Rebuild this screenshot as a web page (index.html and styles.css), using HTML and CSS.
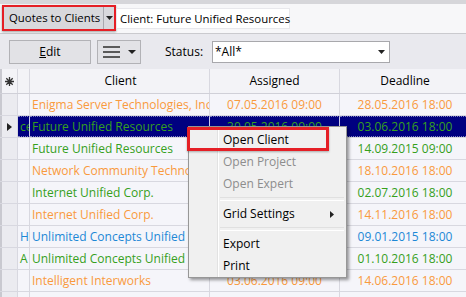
FILE: index.html
```html
<!DOCTYPE html>
<html>
<head>
<meta charset="utf-8">
<link rel="stylesheet" href="styles.css">
</head>
<body>
<div class="app">
  <div class="topstrip"></div>
  <div class="topbar">
    <div class="viewmark">
      <div class="viewbtn">
        <span class="viewlabel">Quotes to Clients</span>
        <span class="viewsplit"><svg width="7" height="4" viewBox="0 0 7 4"><path d="M0 0h7L3.5 4z" fill="#222"/></svg></span>
      </div>
    </div>
    <div class="crumb">Client: Future Unified Resources</div>
  </div>
  <div class="toolbar">
    <div class="btn edit"><span><u>E</u>dit</span></div>
    <div class="btn menubtn">
      <svg width="17" height="12" viewBox="0 0 17 12"><rect x="0" y="0" width="17" height="2" fill="#5a5a5a"/><rect x="0" y="5" width="17" height="2" fill="#5a5a5a"/><rect x="0" y="10" width="17" height="2" fill="#5a5a5a"/></svg>
      <svg width="8" height="4" viewBox="0 0 8 4"><path d="M0 0h8L4 4z" fill="#222"/></svg>
    </div>
    <span class="statuslbl">Status:</span>
    <div class="select"><span>*All*</span><svg width="7" height="4" viewBox="0 0 7 4"><path d="M0 0h7L3.5 4z" fill="#222"/></svg></div>
  </div>
  <div class="grid">
    <div class="row head">
      <div class="c c0"><svg width="9" height="9" viewBox="0 0 9 9"><g stroke="#333" stroke-width="1.3"><path d="M4.5 0v9M0 4.5h9M1.3 1.3l6.4 6.4M7.7 1.3l-6.4 6.4"/></g></svg></div>
      <div class="c c1"></div>
      <div class="c c2 hc">Client</div>
      <div class="c c3 hc">Assigned</div>
      <div class="c c4 hc">Deadline</div>
    </div>
    <div class="row or">
      <div class="c c0"></div><div class="c c1"></div>
      <div class="c c2">Enigma Server Technologies, Inc.</div>
      <div class="c c3">07.05.2016 09:00</div>
      <div class="c c4">28.05.2016 18:00</div>
    </div>
    <div class="row gr sel">
      <div class="c c0"><svg width="5" height="8" viewBox="0 0 5 8"><path d="M0 0l5 4-5 4z" fill="#222"/></svg></div>
      <div class="c c1"><span class="frag">ce</span></div>
      <div class="c c2">Future Unified Resources</div>
      <div class="c c3">30.05.2016 09:00</div>
      <div class="c c4">03.06.2016 18:00</div>
    </div>
    <div class="row gr">
      <div class="c c0"></div><div class="c c1"></div>
      <div class="c c2">Future Unified Resources</div>
      <div class="c c3">01.09.2015 09:00</div>
      <div class="c c4">14.09.2015 09:00</div>
    </div>
    <div class="row or">
      <div class="c c0"></div><div class="c c1"></div>
      <div class="c c2">Network Community Technologies</div>
      <div class="c c3">10.10.2016 09:00</div>
      <div class="c c4">18.10.2016 18:00</div>
    </div>
    <div class="row gr">
      <div class="c c0"></div><div class="c c1"></div>
      <div class="c c2">Internet Unified Corp.</div>
      <div class="c c3">20.06.2016 09:00</div>
      <div class="c c4">02.07.2016 18:00</div>
    </div>
    <div class="row or">
      <div class="c c0"></div><div class="c c1"></div>
      <div class="c c2">Internet Unified Corp.</div>
      <div class="c c3">01.11.2016 09:00</div>
      <div class="c c4">14.11.2016 18:00</div>
    </div>
    <div class="row bl">
      <div class="c c0"></div><div class="c c1"><span class="frag">H</span></div>
      <div class="c c2">Unlimited Concepts Unified</div>
      <div class="c c3">02.01.2015 09:00</div>
      <div class="c c4">09.01.2015 18:00</div>
    </div>
    <div class="row gr">
      <div class="c c0"></div><div class="c c1"><span class="frag">A</span></div>
      <div class="c c2">Unlimited Concepts Unified</div>
      <div class="c c3">20.09.2016 09:00</div>
      <div class="c c4">01.10.2016 18:00</div>
    </div>
    <div class="row or">
      <div class="c c0"></div><div class="c c1"></div>
      <div class="c c2">Intelligent Interworks</div>
      <div class="c c3">03.06.2016 09:00</div>
      <div class="c c4">14.06.2016 18:00</div>
    </div>
    <div class="row or">
      <div class="c c0"></div><div class="c c1"></div>
      <div class="c c2"></div>
      <div class="c c3"></div>
      <div class="c c4"></div>
    </div>
  </div>

  <div class="ctxmenu">
    <div class="mi">Open Client</div>
    <div class="mi dis">Open Project</div>
    <div class="mi dis">Open Expert</div>
    <div class="msep"></div>
    <div class="mi">Grid Settings<svg class="sub" width="4" height="7" viewBox="0 0 4 7"><path d="M0 0l4 3.5L0 7z" fill="#222"/></svg></div>
    <div class="msep"></div>
    <div class="mi">Export</div>
    <div class="mi">Print</div>
  </div>
  <div class="mark"></div>
</div>
</body>
</html>
```
FILE: styles.css
```css
* { box-sizing: border-box; }
html, body { margin: 0; padding: 0; }
body {
  width: 466px;
  height: 297px;
  overflow: hidden;
  font-family: "Open Sans", "Noto Sans", sans-serif;
  font-size: 12px;
  color: #000;
  background: #f5f5fa;
}
.app { position: relative; width: 466px; height: 297px; overflow: hidden; }

.topstrip { height: 4px; background: #d6d6da; }
.topbar {
  height: 30px;
  background: #f7f7f9;
  border-bottom: 1px solid #cacace;
  display: flex;
  align-items: flex-start;
  padding-left: 2px;
  font-size: 11.4px;
}
.viewmark {
  margin-top: 1px;
  width: 114px;
  height: 26px;
  border: 2px solid #e51f26;
  box-shadow: 0 1px 2px rgba(0,0,0,0.35);
  display: flex;
}
.viewbtn {
  flex: 1;
  display: flex;
  align-items: center;
  background: #d8d8dc;
}
.viewlabel { padding-left: 5px; width: 99px; white-space: nowrap; line-height: 16px; }
.viewsplit {
  flex: 1;
  height: 100%;
  border-left: 1px solid #a8a8ae;
  display: flex;
  align-items: center;
  justify-content: center;
}
.crumb {
  margin-top: 4px;
  width: 174px;
  height: 21px;
  background: #fff;
  border: 1px solid #e8e8ec;
  padding-left: 3px;
  line-height: 19px;
  white-space: nowrap;
}

.toolbar {
  height: 35px;
  background: #e9e9ee;
  display: flex;
  align-items: center;
  padding-left: 9px;
}
.btn {
  height: 24px;
  border: 1px solid #b2b2b6;
  background: #e2e2e6;
  display: flex;
  align-items: center;
  justify-content: center;
}
.edit { width: 82px; }
.menubtn { width: 44px; margin-left: 6px; gap: 8px; }
.statuslbl { margin-left: 24px; width: 47px; }
.select {
  width: 178px;
  height: 22px;
  background: #fff;
  border: 1px solid #a8a8ac;
  display: flex;
  align-items: center;
  justify-content: space-between;
  padding: 0 4px 0 2px;
}

.grid { width: 470px; }
.row {
  display: grid;
  grid-template-columns: 18px 12px 180px 130px 130px;
  height: 22px;
  border-bottom: 1px solid #d8d8e0;
}
.row.head { height: 25px; background: #f3f3f7; border-bottom: 1px solid #d0d0d8; }
.c {
  border-right: 1px solid #d8d8e0;
  white-space: nowrap;
  overflow: hidden;
  display: flex;
  align-items: center;
  line-height: 16px;
}
.c0 { background: #ebebf0; border-left: 2px solid #c9c9d0; justify-content: center; }
.head .c0 { background: #f3f3f7; }
.c1 { padding-left: 2px; }
.c2 { padding-left: 2px; }
.c3, .c4 { justify-content: center; }
.hc { justify-content: center; }
.c4 { border-right: none; }

.or { color: #f99a3d; }
.gr { color: #35a01c; }
.bl { color: #1d88d6; }

.sel .c1, .sel .c2, .sel .c3, .sel .c4 {
  background: #000080;
  border-top: 1px dotted #8080c0;
  border-bottom: 1px dotted #8080c0;
}
.sel .c1, .sel .c2, .sel .c3 { border-right-color: #c8c8e8; }

.ctxmenu {
  position: absolute;
  left: 188px;
  top: 126px;
  width: 159px;
  height: 152px;
  border: 1px solid #979797;
  background: linear-gradient(to right, transparent 28px, #e2e2e2 28px, #e2e2e2 29px, #ffffff 29px, #ffffff 30px, transparent 30px), #f0f0f0;
  box-shadow: 2px 2px 3px rgba(0,0,0,0.4);
  padding: 2px 2px 0;
}
.mi {
  height: 22px;
  display: flex;
  align-items: center;
  padding-left: 32px;
  line-height: 16px;
}
.mi.dis { color: #8d8d8d; }
.mi .sub { margin-left: auto; margin-right: 10px; }
.msep {
  height: 8px;
  margin-left: 29px;
  display: flex;
  align-items: center;
}
.msep::before {
  content: "";
  display: block;
  width: 100%;
  height: 2px;
  border-top: 1px solid #e0e0e0;
  border-bottom: 1px solid #ffffff;
}
.mark {
  position: absolute;
  left: 187px;
  top: 127px;
  width: 142px;
  height: 24px;
  border: 3px solid #e51f26;
  box-shadow: 0 1px 2px rgba(0,0,0,0.3);
}
```
